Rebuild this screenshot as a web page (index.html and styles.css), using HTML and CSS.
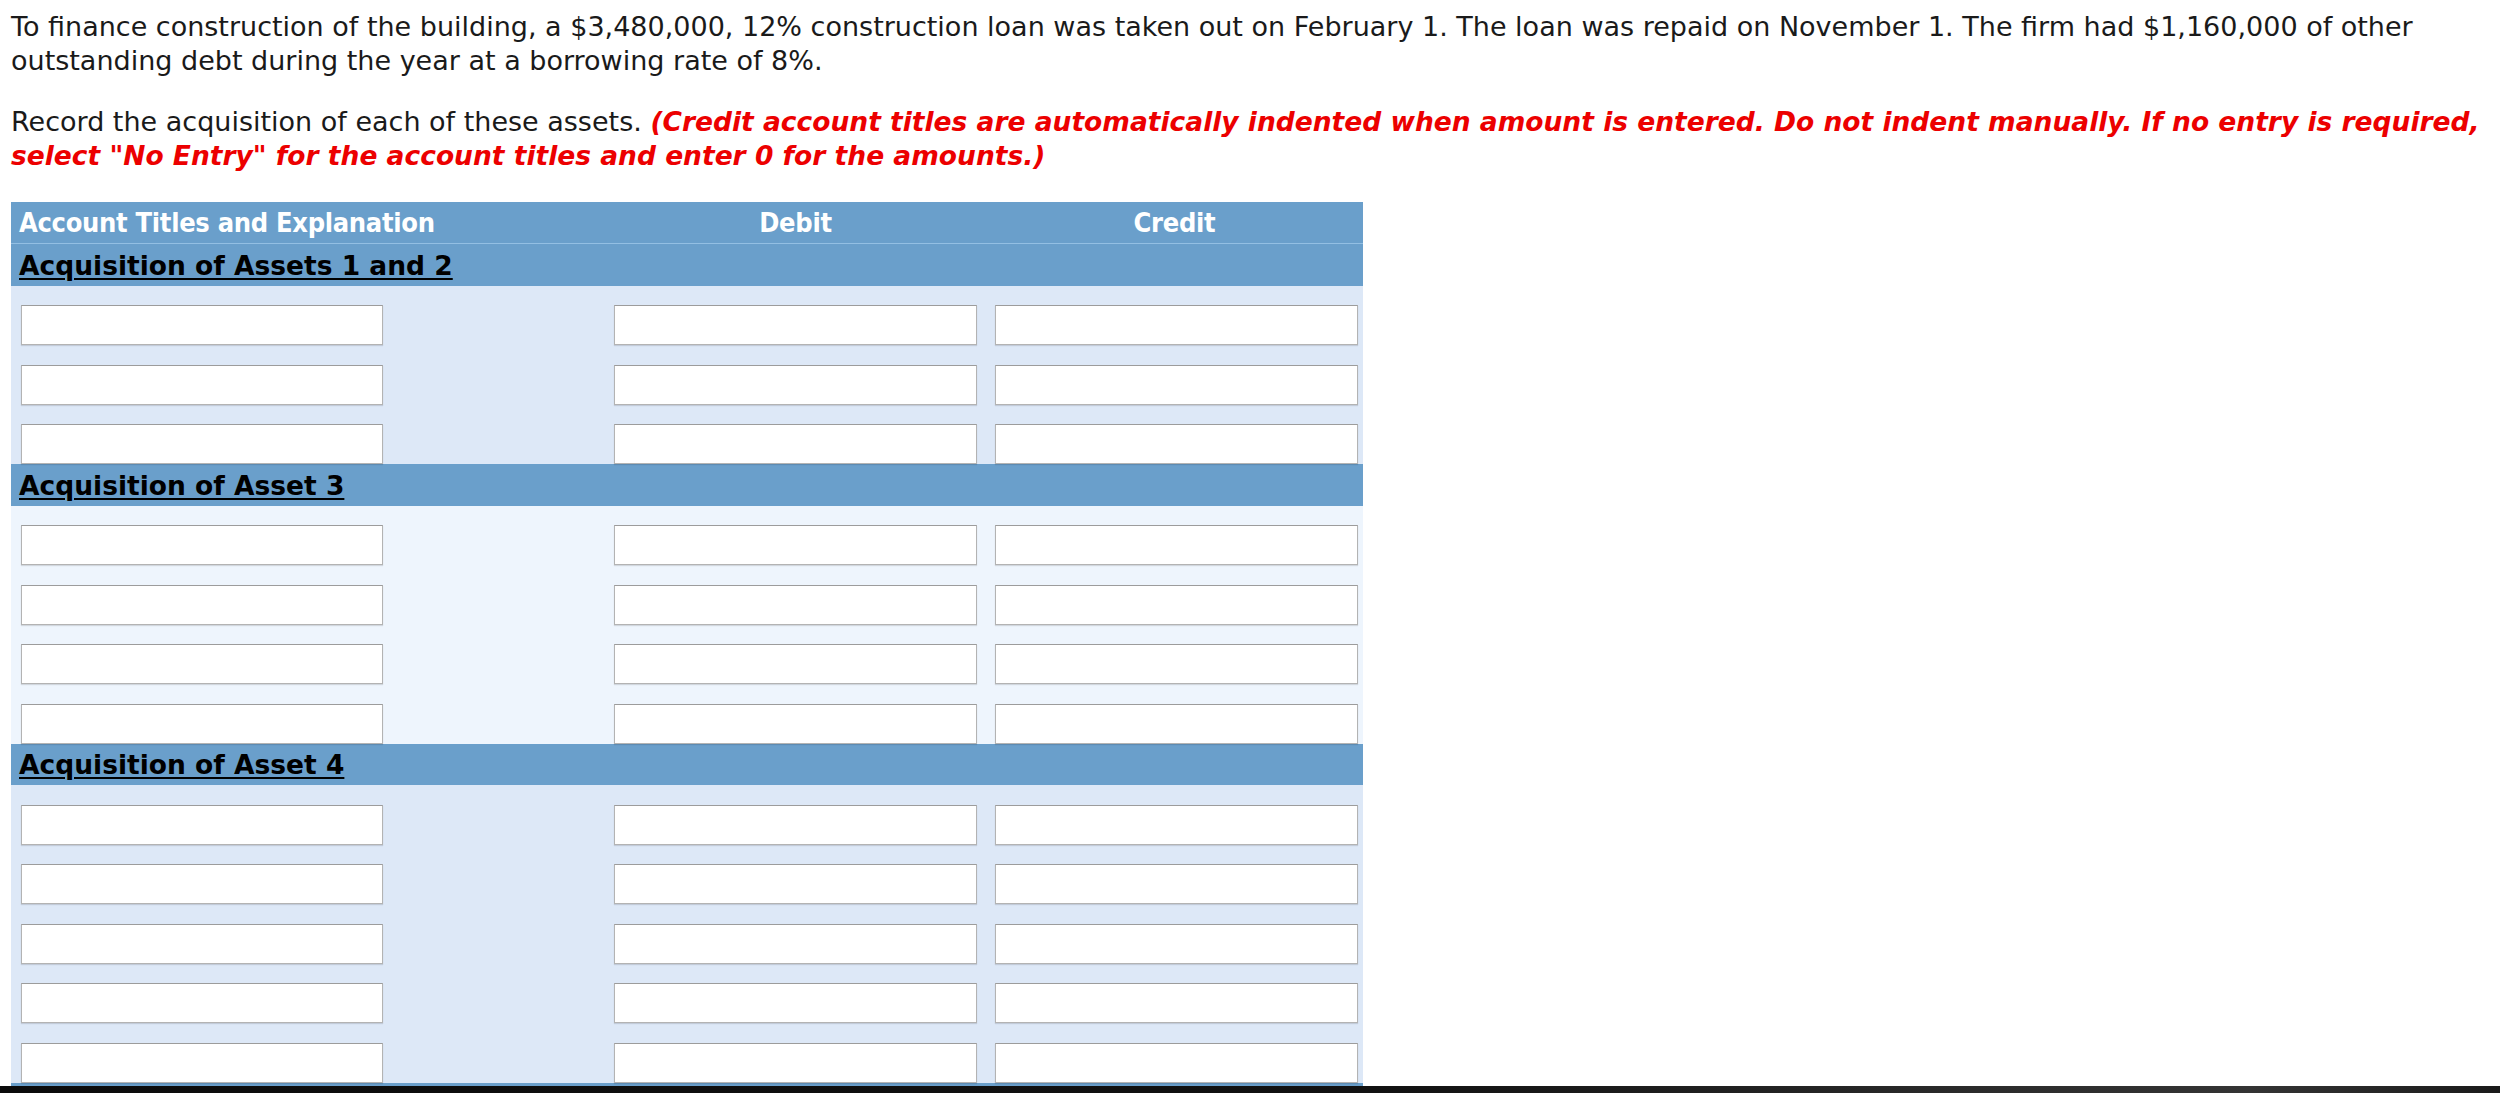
FILE: index.html
```html
<!DOCTYPE html>
<html lang="en">
<head>
<meta charset="utf-8">
<title>Journal entry</title>
<link rel="stylesheet" href="styles.css">
</head>
<body>
<div class="page">
  <p class="para">To finance construction of the building, a $3,480,000, 12% construction loan was taken out on February 1. The loan was repaid on November 1. The firm had $1,160,000 of other<br>outstanding debt during the year at a borrowing rate of 8%.</p>
  <p class="para second">Record the acquisition of each of these assets. <em class="note">(Credit account titles are automatically indented when amount is entered. Do not indent manually. If no entry is required,<br>select "No Entry" for the account titles and enter 0 for the amounts.)</em></p>

  <div class="journal">
    <div class="head">
      <div class="h-acct">Account Titles and Explanation</div>
      <div class="h-amt">Debit</div>
      <div class="h-amt">Credit</div>
    </div>

    <div class="section"><span class="sec-title">Acquisition of Assets 1 and 2</span></div>
    <div class="entry"><input class="fld acct" type="text"><input class="fld amt" type="text"><input class="fld amt" type="text"></div>
    <div class="entry"><input class="fld acct" type="text"><input class="fld amt" type="text"><input class="fld amt" type="text"></div>
    <div class="entry"><input class="fld acct" type="text"><input class="fld amt" type="text"><input class="fld amt" type="text"></div>

    <div class="section"><span class="sec-title">Acquisition of Asset 3</span></div>
    <div class="entry light"><input class="fld acct" type="text"><input class="fld amt" type="text"><input class="fld amt" type="text"></div>
    <div class="entry light"><input class="fld acct" type="text"><input class="fld amt" type="text"><input class="fld amt" type="text"></div>
    <div class="entry light"><input class="fld acct" type="text"><input class="fld amt" type="text"><input class="fld amt" type="text"></div>
    <div class="entry light"><input class="fld acct" type="text"><input class="fld amt" type="text"><input class="fld amt" type="text"></div>

    <div class="section"><span class="sec-title">Acquisition of Asset 4</span></div>
    <div class="entry"><input class="fld acct" type="text"><input class="fld amt" type="text"><input class="fld amt" type="text"></div>
    <div class="entry"><input class="fld acct" type="text"><input class="fld amt" type="text"><input class="fld amt" type="text"></div>
    <div class="entry"><input class="fld acct" type="text"><input class="fld amt" type="text"><input class="fld amt" type="text"></div>
    <div class="entry"><input class="fld acct" type="text"><input class="fld amt" type="text"><input class="fld amt" type="text"></div>
    <div class="entry"><input class="fld acct" type="text"><input class="fld amt" type="text"><input class="fld amt" type="text"></div>

    <div class="section"></div>
  </div>
</div>
<div class="bottom-bar"></div>
</body>
</html>
```

FILE: styles.css
```css
html, body {
  margin: 0;
  padding: 0;
  background: #ffffff;
}

body {
  font-family: "DejaVu Sans", Verdana, sans-serif;
  color: #1a1a1a;
  overflow: hidden;
}

.page {
  padding: 10px 11px 0 11px;
}

.para {
  margin: 0;
  font-size: 27px;
  line-height: 33.6px;
  white-space: nowrap;
}

.para.second {
  margin-top: 28px;
}

.note {
  color: #ec0000;
  font-weight: bold;
  font-style: italic;
  font-size: 26.5px;
}

.journal {
  margin-top: 30px;
  width: 1352px;
}

.head {
  display: grid;
  grid-template-columns: 594px 381px 377px;
  height: 42px;
  box-sizing: border-box;
  background: #6a9fcb;
  border-bottom: 1px solid #93bfe3;
  align-items: center;
  color: #ffffff;
  font-weight: bold;
  font-size: 27px;
  font-stretch: condensed;
  letter-spacing: -0.3px;
}

.h-acct {
  padding-left: 8px;
}

.h-amt {
  text-align: center;
}

.section {
  height: 41.5px;
  background: #6a9fcb;
  display: flex;
  align-items: center;
  padding-left: 8px;
}

.sec-title {
  font-weight: bold;
  font-size: 26.5px;
  color: #000000;
  text-decoration: underline;
  text-decoration-thickness: 2px;
  text-underline-offset: 3px;
}

.entry {
  display: grid;
  grid-template-columns: 594px 381px 377px;
  height: 59.5px;
  box-sizing: border-box;
  padding-top: 19.5px;
  align-items: start;
  background: #dde8f7;
}

.entry.light {
  background: #eef5fd;
}

.fld {
  display: block;
  box-sizing: border-box;
  height: 40px;
  margin: 0;
  padding: 0 4px;
  background: #ffffff;
  border: 1px solid #b3b3b3;
  border-top-color: #9c9c9c;
  border-radius: 0;
  box-shadow: 0 1px 1px rgba(0, 0, 0, 0.12);
  outline: none;
}

.fld.acct {
  margin-left: 10px;
  width: 362px;
}

.fld.amt {
  margin-left: 9px;
  width: 363px;
}

.bottom-bar {
  position: fixed;
  left: 0;
  right: 0;
  bottom: 0;
  height: 7px;
  background: linear-gradient(to right, #0b0b0b 0%, #111111 55%, #2c2c2c 80%, #343434 90%, #1a1a1a 100%);
}
```
